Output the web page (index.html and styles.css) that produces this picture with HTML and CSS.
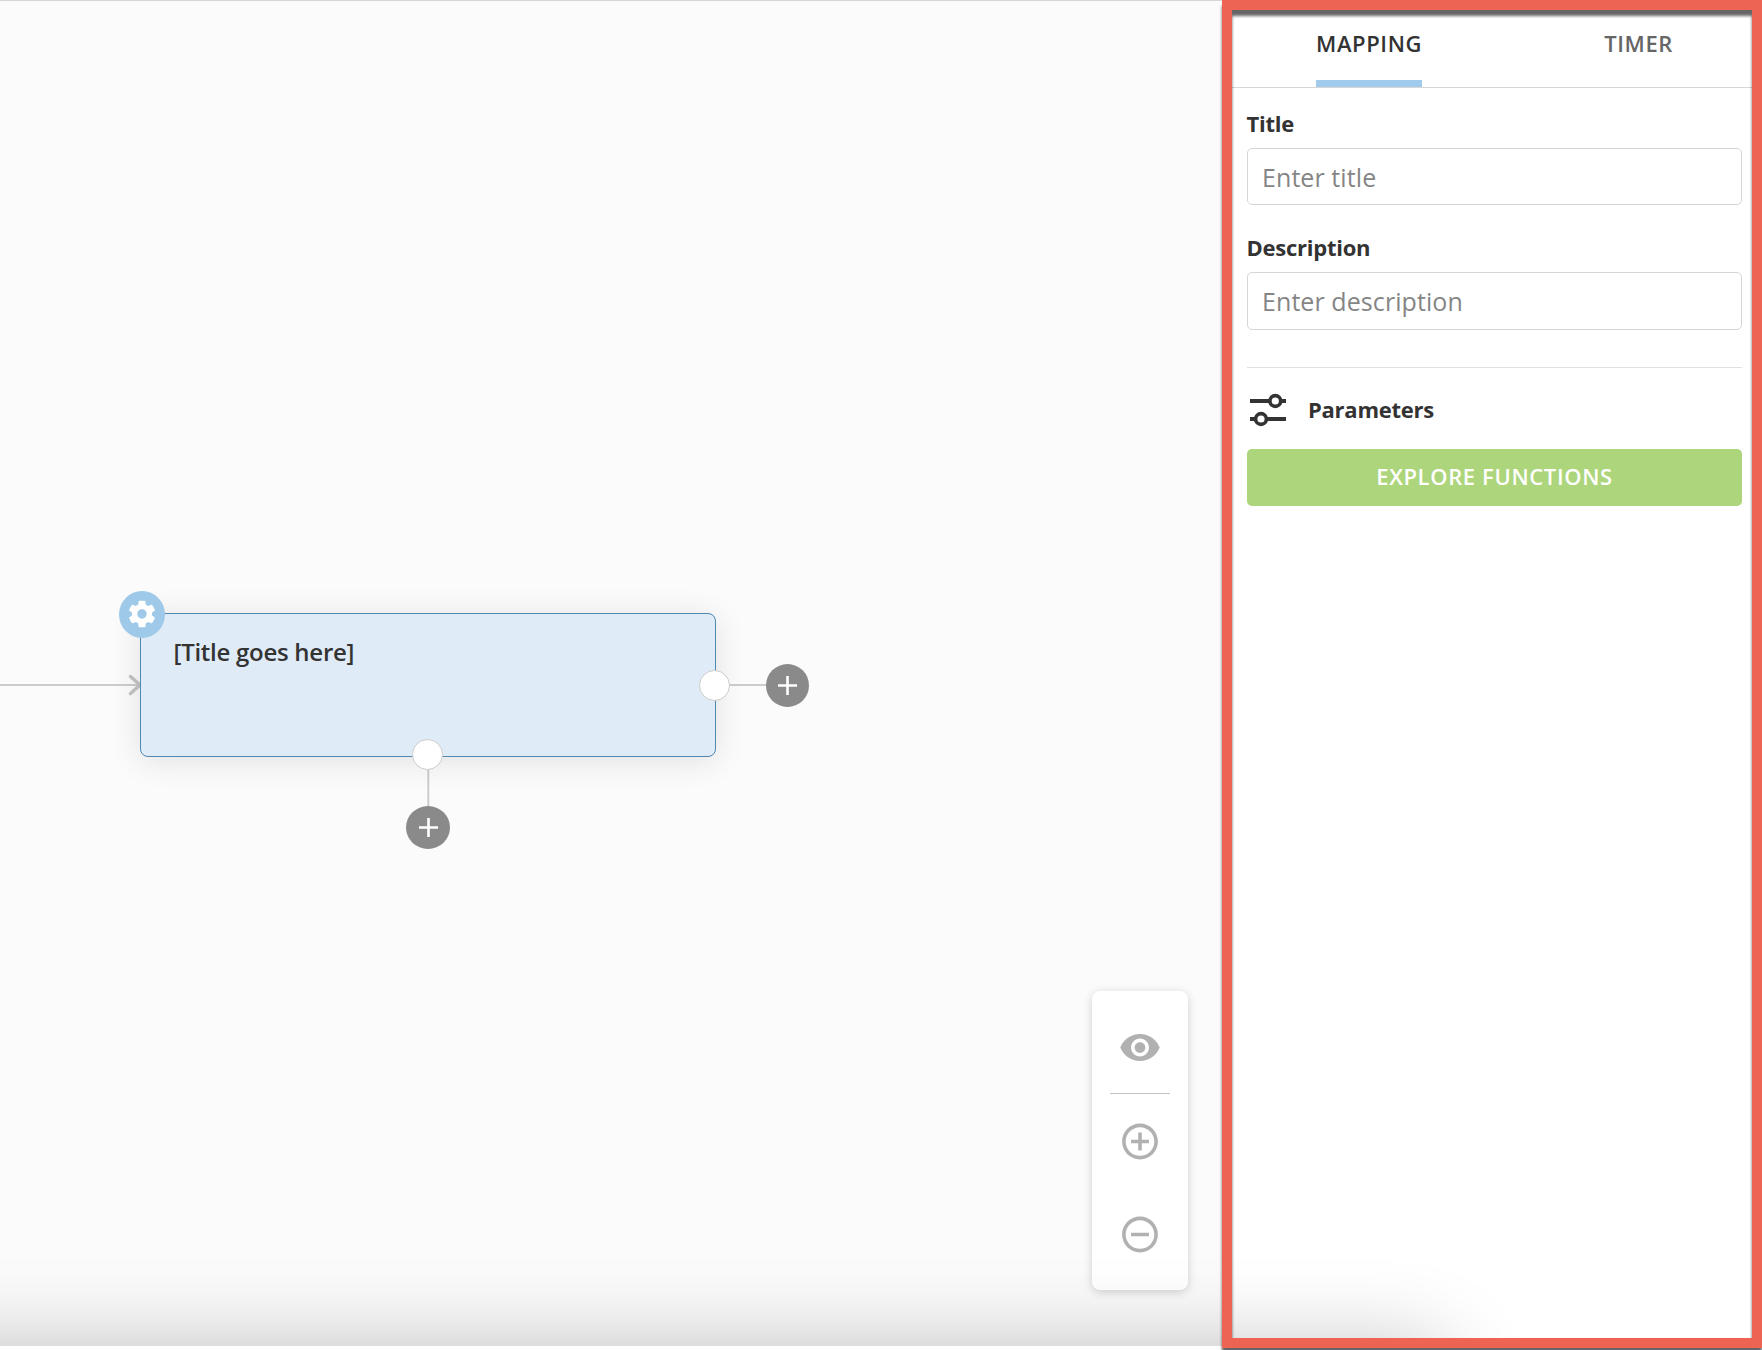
FILE: index.html
```html
<!DOCTYPE html>
<html lang="en">
<head>
<meta charset="utf-8">
<title>Flow editor</title>
<link rel="stylesheet" href="styles.css">
</head>
<body>
<div class="app">
  <main class="canvas">
    <svg class="edges" width="830" height="860" fill="none" stroke="#cccccc" stroke-width="2">
      <path d="M0 685H140"/>
      <path d="M130.500 676.500L140 685L130.500 693.500" stroke="#c4c4c4" stroke-width="3.500" stroke-linecap="round"/>
      <path d="M728 685H768"/>
      <path d="M428.300 768V808"/>
    </svg>
    <section class="node"><h2 class="node-title">[Title goes here]</h2></section>
    <span class="badge">
      <svg width="32" height="32" viewBox="0 0 24 24" fill="#fff"><path d="M19.430 12.980c.04-.32.07-.64.07-.98s-.03-.66-.07-.98l2.110-1.650c.19-.15.24-.42.12-.64l-2-3.460c-.12-.22-.39-.3-.61-.22l-2.490 1c-.52-.4-1.080-.73-1.690-.98l-.38-2.650C14.460 2.180 14.250 2 14 2h-4c-.25 0-.46.18-.49.42l-.38 2.650c-.61.25-1.170.59-1.690.98l-2.490-1c-.23-.09-.49 0-.61.22l-2 3.460c-.13.22-.07.49.12.64l2.110 1.650c-.04.32-.07.65-.07.98s.03.66.07.98l-2.110 1.650c-.19.15-.24.42-.12.64l2 3.460c.12.22.39.3.61.22l2.490-1c.52.4 1.080.73 1.690.98l.38 2.650c.03.24.24.42.49.42h4c.25 0 .46-.18.49-.42l.38-2.650c.61-.25 1.170-.59 1.690-.98l2.490 1c.23.09.49 0 .61-.22l2-3.460c.12-.22.07-.49-.12-.64l-2.110-1.650zM12 15.500c-1.930 0-3.500-1.570-3.500-3.500s1.570-3.500 3.500-3.500 3.500 1.570 3.500 3.500-1.570 3.500-3.500 3.500z"/></svg>
    </span>
    <span class="port port-right"></span>
    <span class="port port-bottom"></span>
    <button class="add add-right" aria-label="Add step"><svg width="19" height="19" stroke="#fff" stroke-width="2.600"><path d="M9.500 0V19M0 9.500H19"/></svg></button>
    <button class="add add-bottom" aria-label="Add branch"><svg width="19" height="19" stroke="#fff" stroke-width="2.600"><path d="M9.500 0V19M0 9.500H19"/></svg></button>
    <div class="toolbar">
      <svg width="44" height="43" viewBox="0 0 24 24" fill="#b1b1b1"><path d="M12 4.500C7 4.500 2.730 7.610 1 12c1.730 4.390 6 7.500 11 7.500s9.270-3.110 11-7.500c-1.730-4.390-6-7.500-11-7.500zM12 17c-2.760 0-5-2.240-5-5s2.240-5 5-5 5 2.240 5 5-2.240 5-5 5zm0-8c-1.660 0-3 1.340-3 3s1.340 3 3 3 3-1.340 3-3-1.340-3-3-3z"/></svg>
      <hr class="toolbar-rule">
      <svg class="zoom-in" width="44" height="43" viewBox="0 0 24 24" fill="#b1b1b1"><path d="M13 7h-2v4H7v2h4v4h2v-4h4v-2h-4V7zm-1-5C6.480 2 2 6.480 2 12s4.480 10 10 10 10-4.480 10-10S17.520 2 12 2zm0 18c-4.410 0-8-3.590-8-8s3.590-8 8-8 8 3.590 8 8-3.590 8-8 8z"/></svg>
      <svg width="44" height="43" viewBox="0 0 24 24" fill="#b1b1b1"><path d="M7 11v2h10v-2H7zm5-9C6.480 2 2 6.480 2 12s4.480 10 10 10 10-4.480 10-10S17.520 2 12 2zm0 18c-4.410 0-8-3.590-8-8s3.590-8 8-8 8 3.590 8 8-3.590 8-8 8z"/></svg>
    </div>
  </main>
  <aside class="panel">
    <nav class="tabs">
      <a class="tab active">MAPPING</a>
      <a class="tab">TIMER</a>
    </nav>
    <form class="form">
      <label class="label" for="title">Title</label>
      <input class="input" id="title" placeholder="Enter title">
      <label class="label label-next" for="desc">Description</label>
      <input class="input input-desc" id="desc" placeholder="Enter description">
      <div class="params">
        <svg width="36" height="34" fill="none" stroke="#333" stroke-width="4"><path d="M0 8H19M31 8H36M0 26H5M17 26H36"/><circle cx="25.300" cy="8" r="5.400" stroke-width="3.600"/><circle cx="11" cy="26" r="5.400" stroke-width="3.600"/></svg>
        <span class="params-title">Parameters</span>
      </div>
      <button class="explore" type="button">EXPLORE FUNCTIONS</button>
    </form>
  </aside>
  <div class="dock-shade"><div class="dock"></div></div>
  <div class="frame"></div>
</div>
</body>
</html>
```
FILE: styles.css
```css
* { box-sizing: border-box; }
body {
  margin: 0;
  background: #fff;
  color: #333;
  font-family: "Open Sans", sans-serif;
}
.app {
  position: relative;
  display: flex;
  width: 1762px;
  height: 1350px;
  padding-bottom: 4px;
  overflow: hidden;
}
.canvas {
  position: relative;
  width: 1224px;
  background: #fbfbfb;
  border-top: 1px solid #d6d6d6;
}
/* Canvas items sit at free coordinates, offset by the 1px top border. */
.edges { position: absolute; left: 0; top: -1px; }
.node {
  position: absolute;
  left: 140px;
  top: 612px;
  width: 576px;
  height: 144px;
  padding: 21px 32.500px;
  background: #dfebf7;
  border: 1px solid #4f88b0;
  border-radius: 8px;
  box-shadow: 0 4px 32px rgba(0, 0, 0, .11);
}
.node-title {
  margin: 0;
  font-size: 24px;
  line-height: 33px;
  font-weight: 570;
  letter-spacing: -.27px;
}
.badge, .add {
  position: absolute;
  display: flex;
  align-items: center;
  justify-content: center;
  border-radius: 50%;
}
.badge {
  left: 119px;
  top: 590px;
  width: 46px;
  height: 47px;
  padding-bottom: 2px;
  background: #9fc9e9;
}
.port {
  position: absolute;
  width: 31px;
  height: 31px;
  border: 1px solid #ccc;
  border-radius: 50%;
  background: #fff;
}
.port-right { left: 699px; top: 669px; }
.port-bottom { left: 412.400px; top: 738px; }
.add {
  width: 43px;
  height: 43px;
  padding: 0;
  border: 0;
  background: #8a8a8a;
}
.add-right { left: 765.500px; top: 662.500px; }
.add-bottom { left: 406px; top: 805px; width: 44px; }
.toolbar {
  position: absolute;
  left: 1092px;
  top: 990px;
  width: 96px;
  height: 299px;
  padding-top: 35px;
  display: flex;
  flex-direction: column;
  align-items: center;
  background: #fff;
  border-radius: 8px;
  box-shadow: 0 2px 10px rgba(0, 0, 0, .18);
}
.toolbar-rule {
  width: 60px;
  height: 1px;
  margin: 24px 0 26px;
  border: 0;
  background: #c4c4c4;
}
.zoom-in { margin-bottom: 50px; }
.panel { width: 538px; background: #fff; }
.tabs {
  display: flex;
  height: 88px;
  padding-left: 92px;
  gap: 182px;
  border-bottom: 1px solid #d6d6d6;
}
.tab {
  padding-top: 28px;
  font-size: 22px;
  line-height: 30px;
  font-weight: 550;
  letter-spacing: .62px;
  color: #666;
}
.tab.active { color: #333; border-bottom: 7px solid #a1cbec; }
.form {
  display: flex;
  flex-direction: column;
  padding: 20px 20px 0 23px;
}
.label, .params-title {
  font-size: 22px;
  line-height: 30px;
  font-weight: 700;
  letter-spacing: -.25px;
}
.label { text-indent: -.5px; }
.label-next { margin-top: 27px; }
.input {
  height: 57px;
  margin-top: 10px;
  padding: 0 14px;
  border: 1px solid #d6d6d6;
  border-radius: 5px;
  background: #fff;
  font: 400 25px "Open Sans", sans-serif;
  letter-spacing: .08px;
}
.input-desc { height: 58px; }
.input::placeholder { color: #858585; opacity: 1; }
.params {
  display: flex;
  align-items: center;
  gap: 22px;
  height: 82px;
  margin-top: 37px;
  padding: 3px 0 0 3px;
  border-top: 1px solid #e0e0e0;
}
.params-title { padding-bottom: 2px; }
.explore {
  height: 57px;
  padding: 0 0 3px;
  border: 0;
  border-radius: 5px;
  background: #acd57c;
  color: #fff;
  font: 550 22px "Open Sans", sans-serif;
  letter-spacing: .63px;
}
.dock-shade {
  position: absolute;
  inset: 0 0 4px;
  overflow: hidden;
  pointer-events: none;
}
.dock {
  position: absolute;
  left: -300px;
  top: 1346px;
  width: 1742px;
  height: 400px;
  box-shadow: 0 0 80px rgba(0, 0, 0, .24);
}
.frame {
  position: absolute;
  left: 1222px;
  top: 0;
  width: 540px;
  height: 1348px;
  border: 10px solid #ed6453;
  filter: drop-shadow(0 6px 1.5px rgba(0, 0, 0, .6));
  pointer-events: none;
}
```
